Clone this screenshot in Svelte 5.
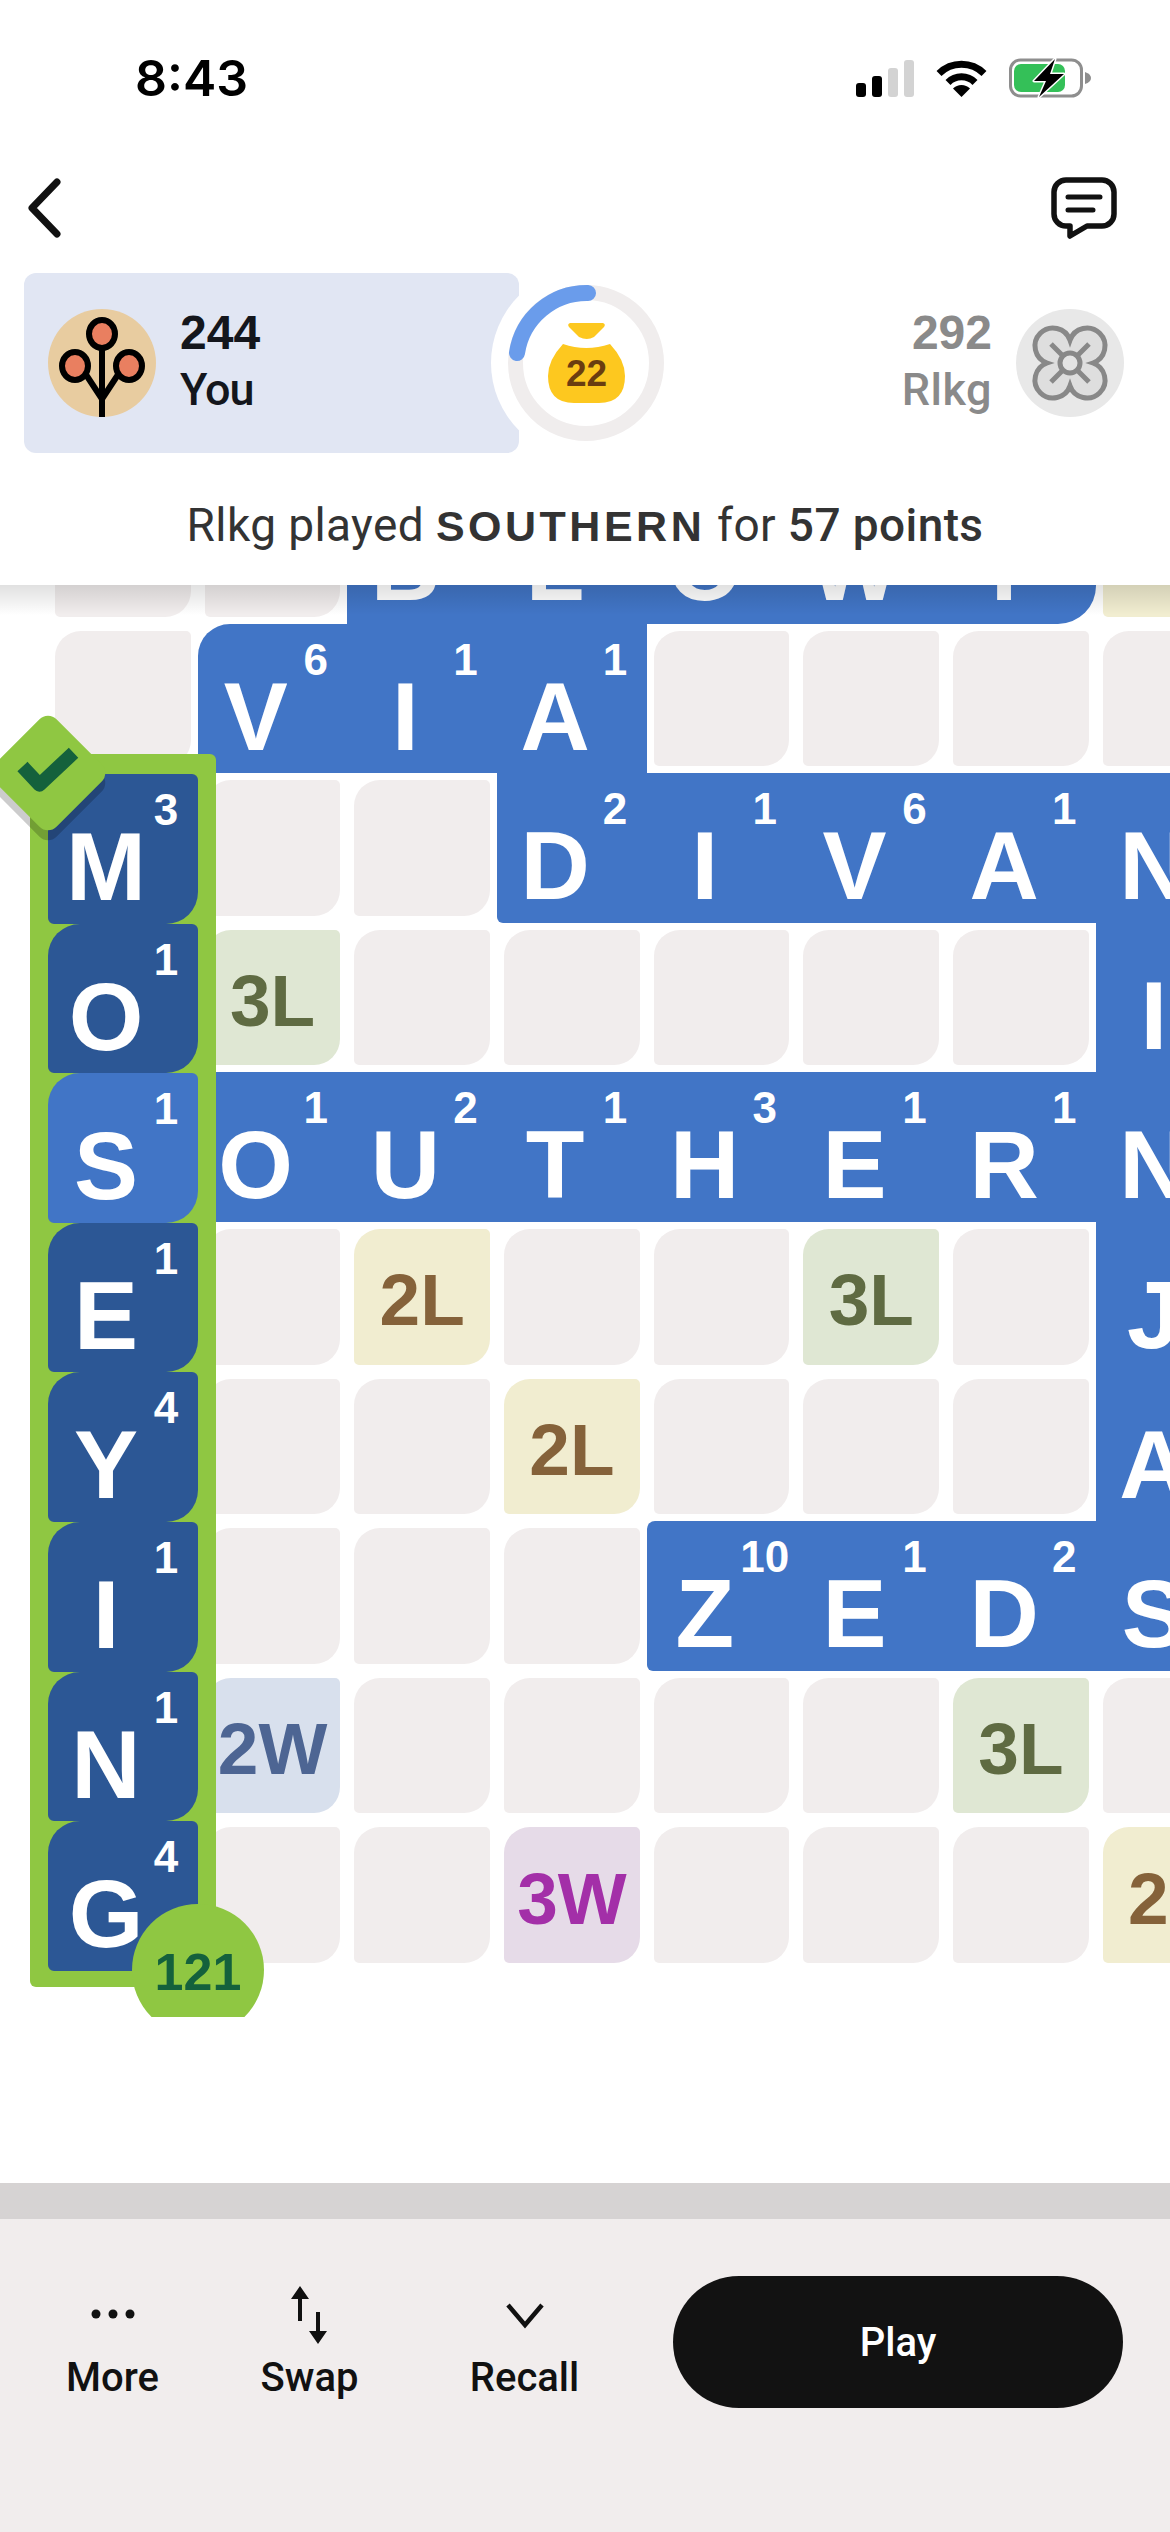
<script>
  // board rows: "." empty, "_" covered by the placed word, "3L" etc bonus, "V6" letter + score, ":x" corner
  const rows = [
    '. . B3 L1 O1 W4 Y4:br 2L',
    '. V6:tl I1 A1 . . . .',
    '_ . . D2:bl I1 V6 A1 N1',
    '_ 3L . . . . . I1',
    '_ O1 U2 T1 H3 E1 R1 N1',
    '_ . 2L . . 3L . J8',
    '_ . . 2L . . . A1',
    '_ . . . Z10:zed E1 D2 S1',
    '_ 2W . . . . 3L .',
    '_ . . 3W . . . 2L'
  ]

  const bonus = { '2L': 'l2', '3L': 'l3', '2W': 'w2', '3W': 'w3' }

  const cells = rows.flatMap((row) =>
    row.split(' ').map((token) => {
      if (token === '.' || token === '_') return { kind: token === '.' ? 'empty' : 'none' }
      if (bonus[token]) return { kind: 'bonus', label: token, tone: bonus[token] }
      const [tile, corner = ''] = token.split(':')
      return { kind: 'tile', letter: tile[0], score: tile.slice(1), corner }
    })
  )

  const placed = [
    ['M', 3], ['O', 1], ['S', 1, true], ['E', 1], ['Y', 4], ['I', 1], ['N', 1], ['G', 4]
  ]
</script>

<div class="screen">
  <div class="status">
    <span class="time">8:43</span>
    <div class="status-icons">
      <svg width="58" height="37" viewBox="0 0 58 37">
        <rect x="0" y="23" width="10" height="14" rx="3" fill="#000" />
        <rect x="16" y="16" width="10" height="21" rx="3" fill="#000" />
        <rect x="32" y="8" width="10" height="29" rx="3" fill="#d3d3d3" />
        <rect x="48" y="0" width="10" height="37" rx="3" fill="#d3d3d3" />
      </svg>
      <svg width="51" height="37" viewBox="0 0 51 37">
        <path d="M3 13.5 A32 32 0 0 1 48 13.5" fill="none" stroke="#000" stroke-width="7" />
        <path d="M12 22.5 A19 19 0 0 1 39 22.5" fill="none" stroke="#000" stroke-width="7" />
        <path d="M25.5 37 L17 28.5 A12 12 0 0 1 34 28.5 Z" fill="#000" />
      </svg>
      <svg width="82" height="40" viewBox="0 0 82 40">
        <rect x="1.5" y="2" width="71" height="36" rx="10" fill="none" stroke="#8e8e8e" stroke-width="3" />
        <rect x="5" y="6" width="51" height="28" rx="7" fill="#34c058" />
        <path d="M76 14 Q82 16 82 20 Q82 24 76 26 Z" fill="#8e8e8e" />
        <path d="M46 1 L25 23 H37 L30 39 L55 16 H41 Z" fill="#000" stroke="#fff" stroke-width="3" stroke-linejoin="round" paint-order="stroke" />
      </svg>
    </div>
  </div>

  <div class="nav">
    <svg width="36" height="60" viewBox="0 0 36 60">
      <path d="M31 4 L6 30 L31 56" fill="none" stroke="#111" stroke-width="7" stroke-linecap="round" stroke-linejoin="round" />
    </svg>
    <svg width="66" height="62" viewBox="0 0 66 62">
      <path d="M15 3 H51 A12 12 0 0 1 63 15 V37 A12 12 0 0 1 51 49 H36 L19 59 V49 H15 A12 12 0 0 1 3 37 V15 A12 12 0 0 1 15 3 Z" fill="none" stroke="#111" stroke-width="5.5" stroke-linejoin="round" />
      <path d="M17 20 H49 M17 33 H42" stroke="#111" stroke-width="5" stroke-linecap="round" />
    </svg>
  </div>

  <div class="players">
    <div class="me">
      <svg class="avatar" width="108" height="108" viewBox="0 0 108 108">
        <circle cx="54" cy="54" r="54" fill="#e8cca0" />
        <path d="M54 40 V108 M54 90 L33 58 M54 90 L75 58" fill="none" stroke="#000" stroke-width="6" />
        <ellipse cx="54" cy="25" rx="13" ry="14" fill="#e97f60" stroke="#000" stroke-width="6" />
        <ellipse cx="27" cy="57" rx="13" ry="14" fill="#e97f60" stroke="#000" stroke-width="6" />
        <ellipse cx="81" cy="57" rx="13" ry="14" fill="#e97f60" stroke="#000" stroke-width="6" />
      </svg>
      <div class="who">
        <span class="score">244</span>
        <span class="name">You</span>
      </div>
    </div>

    <svg class="ring" width="190" height="190" viewBox="0 0 190 190">
      <circle cx="95" cy="95" r="95" fill="#fff" />
      <circle cx="95" cy="95" r="70.5" fill="none" stroke="#f0eded" stroke-width="15" />
      <path d="M97 25 A70.5 70.5 0 0 0 26 85" fill="none" stroke="#6a9ceb" stroke-width="16" stroke-linecap="round" />
      <path d="M79 55 H112 Q115 56 113 59 L103 69 Q96 73 88 69 L78 59 Q76 56 79 55 Z" fill="#fdc81f" />
      <path d="M72 76 Q95 84 119 76 Q134 92 134 108 Q134 135 108 135 H83 Q57 135 57 108 Q57 92 72 76 Z" fill="#fdc81f" />
      <text x="95.5" y="118" text-anchor="middle" class="bag-count">22</text>
    </svg>

    <div class="them">
      <div class="who right">
        <span class="score">292</span>
        <span class="name">Rlkg</span>
      </div>
      <svg class="avatar" width="108" height="108" viewBox="-54 -54 108 108">
        <circle r="54" fill="#e8e8e8" />
        <path d="M0 -22.9 A18 18 0 1 1 22.9 0 A18 18 0 1 1 0 22.9 A18 18 0 1 1 -22.9 0 A18 18 0 1 1 0 -22.9 Z" fill="#dedede" stroke="#888" stroke-width="5" />
        <path d="M-19 -19 L19 19 M19 -19 L-19 19" stroke="#888" stroke-width="5" />
        <circle r="10" fill="#e4e4e4" stroke="#888" stroke-width="5" />
      </svg>
    </div>
  </div>

  <p class="caption">Rlkg played <b>SOUTHERN</b> for <span class="strong">57 points</span></p>

  <div class="board">
    <div class="grid">
      {#each cells as cell}
        {#if cell.kind === 'empty'}
          <div class="cell"></div>
        {:else if cell.kind === 'bonus'}
          <div class="cell {cell.tone}">{cell.label}</div>
        {:else if cell.kind === 'tile'}
          <div class="tile {cell.corner}">
            <span class="letter">{cell.letter}</span>
            <span class="points">{cell.score}</span>
          </div>
        {:else}
          <div></div>
        {/if}
      {/each}
    </div>

    <div class="placed">
      {#each placed as [letter, score, crossing]}
        <div class="tile held" class:crossing>
          <span class="letter">{letter}</span>
          <span class="points">{score}</span>
        </div>
      {/each}
    </div>

    <div class="check">
      <svg width="66" height="54" viewBox="0 0 62 50">
        <path d="M7 19 L23 36 L55 6" fill="none" stroke="#14613c" stroke-width="13" stroke-linejoin="round" />
      </svg>
    </div>
    <div class="total">121</div>
    <div class="edge"></div>
  </div>

  <div class="rest"></div>
  <div class="divider"></div>

  <div class="actions">
    <div class="tool more">
      <svg width="46" height="60" viewBox="0 0 46 60">
        <circle cx="6" cy="29" r="4.5" /><circle cx="23" cy="29" r="4.5" /><circle cx="40" cy="29" r="4.5" />
      </svg>
      <span>More</span>
    </div>
    <div class="tool swap">
      <svg width="38" height="60" viewBox="0 0 38 60">
        <path d="M9 12 V36 M27 27 V48" stroke="#111" stroke-width="4" fill="none" />
        <path d="M9 1 L18 14 H0 Z M27 59 L18 46 H36 Z" />
      </svg>
      <span>Swap</span>
    </div>
    <div class="tool recall">
      <svg width="38" height="60" viewBox="0 0 38 60">
        <path d="M2 20 L19 40 L36 20" fill="none" stroke="#111" stroke-width="4.5" />
      </svg>
      <span>Recall</span>
    </div>
    <button class="play">Play</button>
  </div>
</div>

<style>
  :global(body) {
    margin: 0;
    background: #fff;
  }

  .screen {
    width: 1170px;
    height: 2532px;
    display: flex;
    flex-direction: column;
    overflow: hidden;
    background: #fff;
    font-family: Roboto, 'Liberation Sans', sans-serif;
    color: #111;
  }

  .status {
    height: 156px;
    box-sizing: border-box;
    padding: 48px 79px 0 135px;
    display: flex;
    justify-content: space-between;
    align-items: flex-start;
  }

  .time {
    font-family: Inter, sans-serif;
    font-size: 50px;
    font-weight: 600;
    line-height: 60px;
    color: #000;
  }

  .status-icons {
    display: flex;
    align-items: center;
    gap: 22px;
    margin-top: 10px;
  }

  .nav {
    height: 117px;
    box-sizing: border-box;
    padding: 0 53px 14px 26px;
    display: flex;
    justify-content: space-between;
    align-items: center;
  }

  .players {
    height: 180px;
    padding: 0 46px 0 24px;
    display: flex;
    align-items: center;
  }

  .me {
    width: 495px;
    height: 180px;
    flex: none;
    box-sizing: border-box;
    padding-left: 24px;
    display: flex;
    align-items: center;
    gap: 24px;
    background: #e1e6f3;
    border-radius: 12px;
  }

  .ring {
    flex: none;
    margin-left: -28px;
    position: relative;
  }

  .bag-count {
    font-family: 'Liberation Sans', sans-serif;
    font-size: 37px;
    font-weight: 700;
    fill: #6a3d10;
  }

  .them {
    margin-left: auto;
    display: flex;
    align-items: center;
    gap: 24px;
  }

  .who {
    display: flex;
    flex-direction: column;
    padding-bottom: 5px;
    color: #14161c;
  }

  .who.right {
    align-items: flex-end;
    color: #8a8a8a;
  }

  .who.right .name {
    letter-spacing: 0.5px;
  }

  .score {
    font-family: 'Liberation Sans', sans-serif;
    font-size: 48px;
    font-weight: 700;
    line-height: 57px;
  }

  .name {
    font-size: 45px;
    font-weight: 500;
    line-height: 57px;
    letter-spacing: -1px;
  }

  .caption {
    margin: 0;
    height: 132px;
    box-sizing: border-box;
    padding-top: 44px;
    text-align: center;
    font-size: 46px;
    line-height: 56px;
    font-weight: 400;
    letter-spacing: 0.4px;
    color: #333;
    white-space: nowrap;
  }

  .caption b {
    font-family: 'Liberation Sans', sans-serif;
    font-weight: 700;
    letter-spacing: 3.5px;
    font-size: 43px;
  }

  .strong {
    font-weight: 500;
  }

  .board {
    position: relative;
    height: 1432px;
    flex: none;
    overflow: hidden;
    font-family: 'Liberation Sans', sans-serif;
  }

  .grid {
    display: grid;
    grid-template-columns: repeat(8, 149.7px);
    grid-auto-rows: 149.6px;
    margin: -111px 0 0 48px;
  }

  .cell {
    margin: 7px;
    display: flex;
    align-items: center;
    justify-content: center;
    padding-top: 6px;
    box-sizing: border-box;
    background: #f1eded;
    border-radius: 26px 5px 26px 5px;
    font-size: 73px;
    font-weight: 700;
  }

  .l2 { background: #f1edd0; color: #85623a; }
  .l3 { background: #dfe7d3; color: #5f6b42; }
  .w2 { background: #d8e0ed; color: #4d6593; }
  .w3 { background: #e6dbe8; color: #a32fa8; }

  .tile {
    position: relative;
    background: #4175c6;
    color: #fff;
  }

  .tl { border-top-left-radius: 32px; }
  .br { border-bottom-right-radius: 38px; }
  .bl { border-bottom-left-radius: 6px; }
  .zed { border-radius: 8px 0 0 6px; }

  .letter {
    display: block;
    width: 116px;
    padding-top: 46px;
    text-align: center;
    font-size: 96px;
    font-weight: 700;
    line-height: 94px;
  }

  .points {
    position: absolute;
    left: 88px;
    top: 20px;
    width: 60px;
    text-align: center;
    font-size: 44px;
    font-weight: 700;
    line-height: 32px;
  }

  .placed {
    position: absolute;
    left: 30px;
    top: 169px;
    width: 150px;
    padding: 20px 18px 16px;
    background: #8fc742;
    border-radius: 6px;
  }

  .held {
    height: 149.6px;
    background: #2c5795;
    border-radius: 32px 6px 32px 6px;
  }

  .held.crossing {
    background: #4175c6;
  }

  .check {
    position: absolute;
    left: 4px;
    top: 144px;
    width: 88px;
    height: 88px;
    display: grid;
    place-items: center;
    background: #8fc742;
    border-radius: 12px;
    box-shadow: 7px 7px 0 rgba(0, 0, 0, 0.2);
    transform: rotate(45deg);
  }

  .check svg {
    transform: rotate(-45deg);
  }

  .total {
    position: absolute;
    left: 132px;
    top: 1319px;
    width: 132px;
    height: 132px;
    border-radius: 50%;
    background: #8fc742;
    color: #14613c;
    font-size: 52px;
    font-weight: 700;
    line-height: 136px;
    text-align: center;
  }

  .edge {
    position: absolute;
    left: 0;
    right: 0;
    top: 0;
    height: 30px;
    background: linear-gradient(rgba(0, 0, 0, 0.12), rgba(0, 0, 0, 0));
  }

  .rest {
    flex: 1;
  }

  .divider {
    height: 36px;
    flex: none;
    background: #d6d3d3;
  }

  .actions {
    height: 313px;
    flex: none;
    box-sizing: border-box;
    padding: 66px 0 0 14px;
    display: flex;
    align-items: flex-start;
    background: #f1eded;
  }

  .tool {
    width: 197px;
    flex: none;
    display: flex;
    flex-direction: column;
    align-items: center;
    gap: 10px;
    font-size: 40px;
    font-weight: 500;
    line-height: 46px;
    color: #111;
  }

  .tool.recall {
    width: 233px;
  }

  .tool svg {
    fill: #111;
  }

  .play {
    width: 450px;
    height: 132px;
    margin: -9px 0 0 32px;
    border: 0;
    border-radius: 66px;
    background: #121212;
    color: #fff;
    font-family: Roboto, 'Liberation Sans', sans-serif;
    font-size: 40px;
    font-weight: 500;
  }
</style>
